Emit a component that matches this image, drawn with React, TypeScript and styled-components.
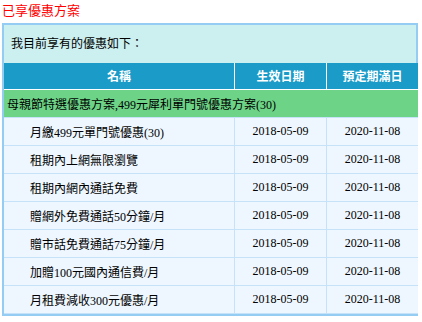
import React from "react";
import styled, { createGlobalStyle } from "styled-components";

const Global = createGlobalStyle`
  html, body { margin: 0; padding: 0; background: #ffffff; }
  body { font-family: "Liberation Serif", "Noto Sans CJK TC", serif; font-size: 12px; color: #000; }
`;

const Page = styled.div`
  width: 422px;
  padding: 0 0 0 2px;
  box-sizing: border-box;
`;

const Title = styled.h2`
  margin: 0;
  padding: 1px 0 0 0;
  height: 21px;
  line-height: 20px;
  font-size: 13px;
  font-weight: normal;
  color: #ff0000;
  box-sizing: border-box;
`;

const Panel = styled.div`
  margin-top: 2px;
  width: 416px;
  box-sizing: border-box;
  border: 2px solid #95ccf3;
  background: #ccf0f0;
`;

const Caption = styled.div`
  height: 38px;
  line-height: 38px;
  padding-left: 7px;
  font-size: 12px;
`;

const Table = styled.table`
  width: 412px;
  table-layout: fixed;
  border-collapse: collapse;
  font-size: 12px;
`;

const HeadCell = styled.th<{ $w: number }>`
  width: ${(p) => p.$w}px;
  height: 26px;
  padding: 0;
  background: #1a9bc8;
  color: #ffffff;
  font-weight: bold;
  text-align: center;
  border-left: 1px solid #ffffff;
  border-bottom: 1px solid #ffffff;
  &:first-child { border-left: none; }
`;

const GroupCell = styled.td`
  height: 27px;
  padding: 0 0 0 3px;
  background: #6dd487;
  border-bottom: 1px solid #c6e2f8;
  white-space: nowrap;
`;

const Cell = styled.td<{ $indent?: boolean }>`
  height: 27px;
  padding: 0 0 0 ${(p) => (p.$indent ? "26px" : "0")};
  background: #eef7ff;
  text-align: ${(p) => (p.$indent ? "left" : "center")};
  border-left: 1px solid #c6e2f8;
  border-bottom: 1px solid #c6e2f8;
  white-space: nowrap;
  &:first-child { border-left: none; }
`;

const items = [
  "月繳499元單門號優惠(30)",
  "租期內上網無限瀏覽",
  "租期內網內通話免費",
  "贈網外免費通話50分鐘/月",
  "贈市話免費通話75分鐘/月",
  "加贈100元國內通信費/月",
  "月租費減收300元優惠/月",
];

export default function App() {
  return (
    <Page>
      <Global />
      <Title>已享優惠方案</Title>
      <Panel>
        <Caption>我目前享有的優惠如下：</Caption>
        <Table>
          <thead>
            <tr>
              <HeadCell $w={230}>名稱</HeadCell>
              <HeadCell $w={91}>生效日期</HeadCell>
              <HeadCell $w={91}>預定期滿日</HeadCell>
            </tr>
          </thead>
          <tbody>
            <tr>
              <GroupCell colSpan={3}>母親節特選優惠方案,499元犀利單門號優惠方案(30)</GroupCell>
            </tr>
            {items.map((name) => (
              <tr key={name}>
                <Cell $indent>{name}</Cell>
                <Cell>2018-05-09</Cell>
                <Cell>2020-11-08</Cell>
              </tr>
            ))}
          </tbody>
        </Table>
      </Panel>
    </Page>
  );
}
